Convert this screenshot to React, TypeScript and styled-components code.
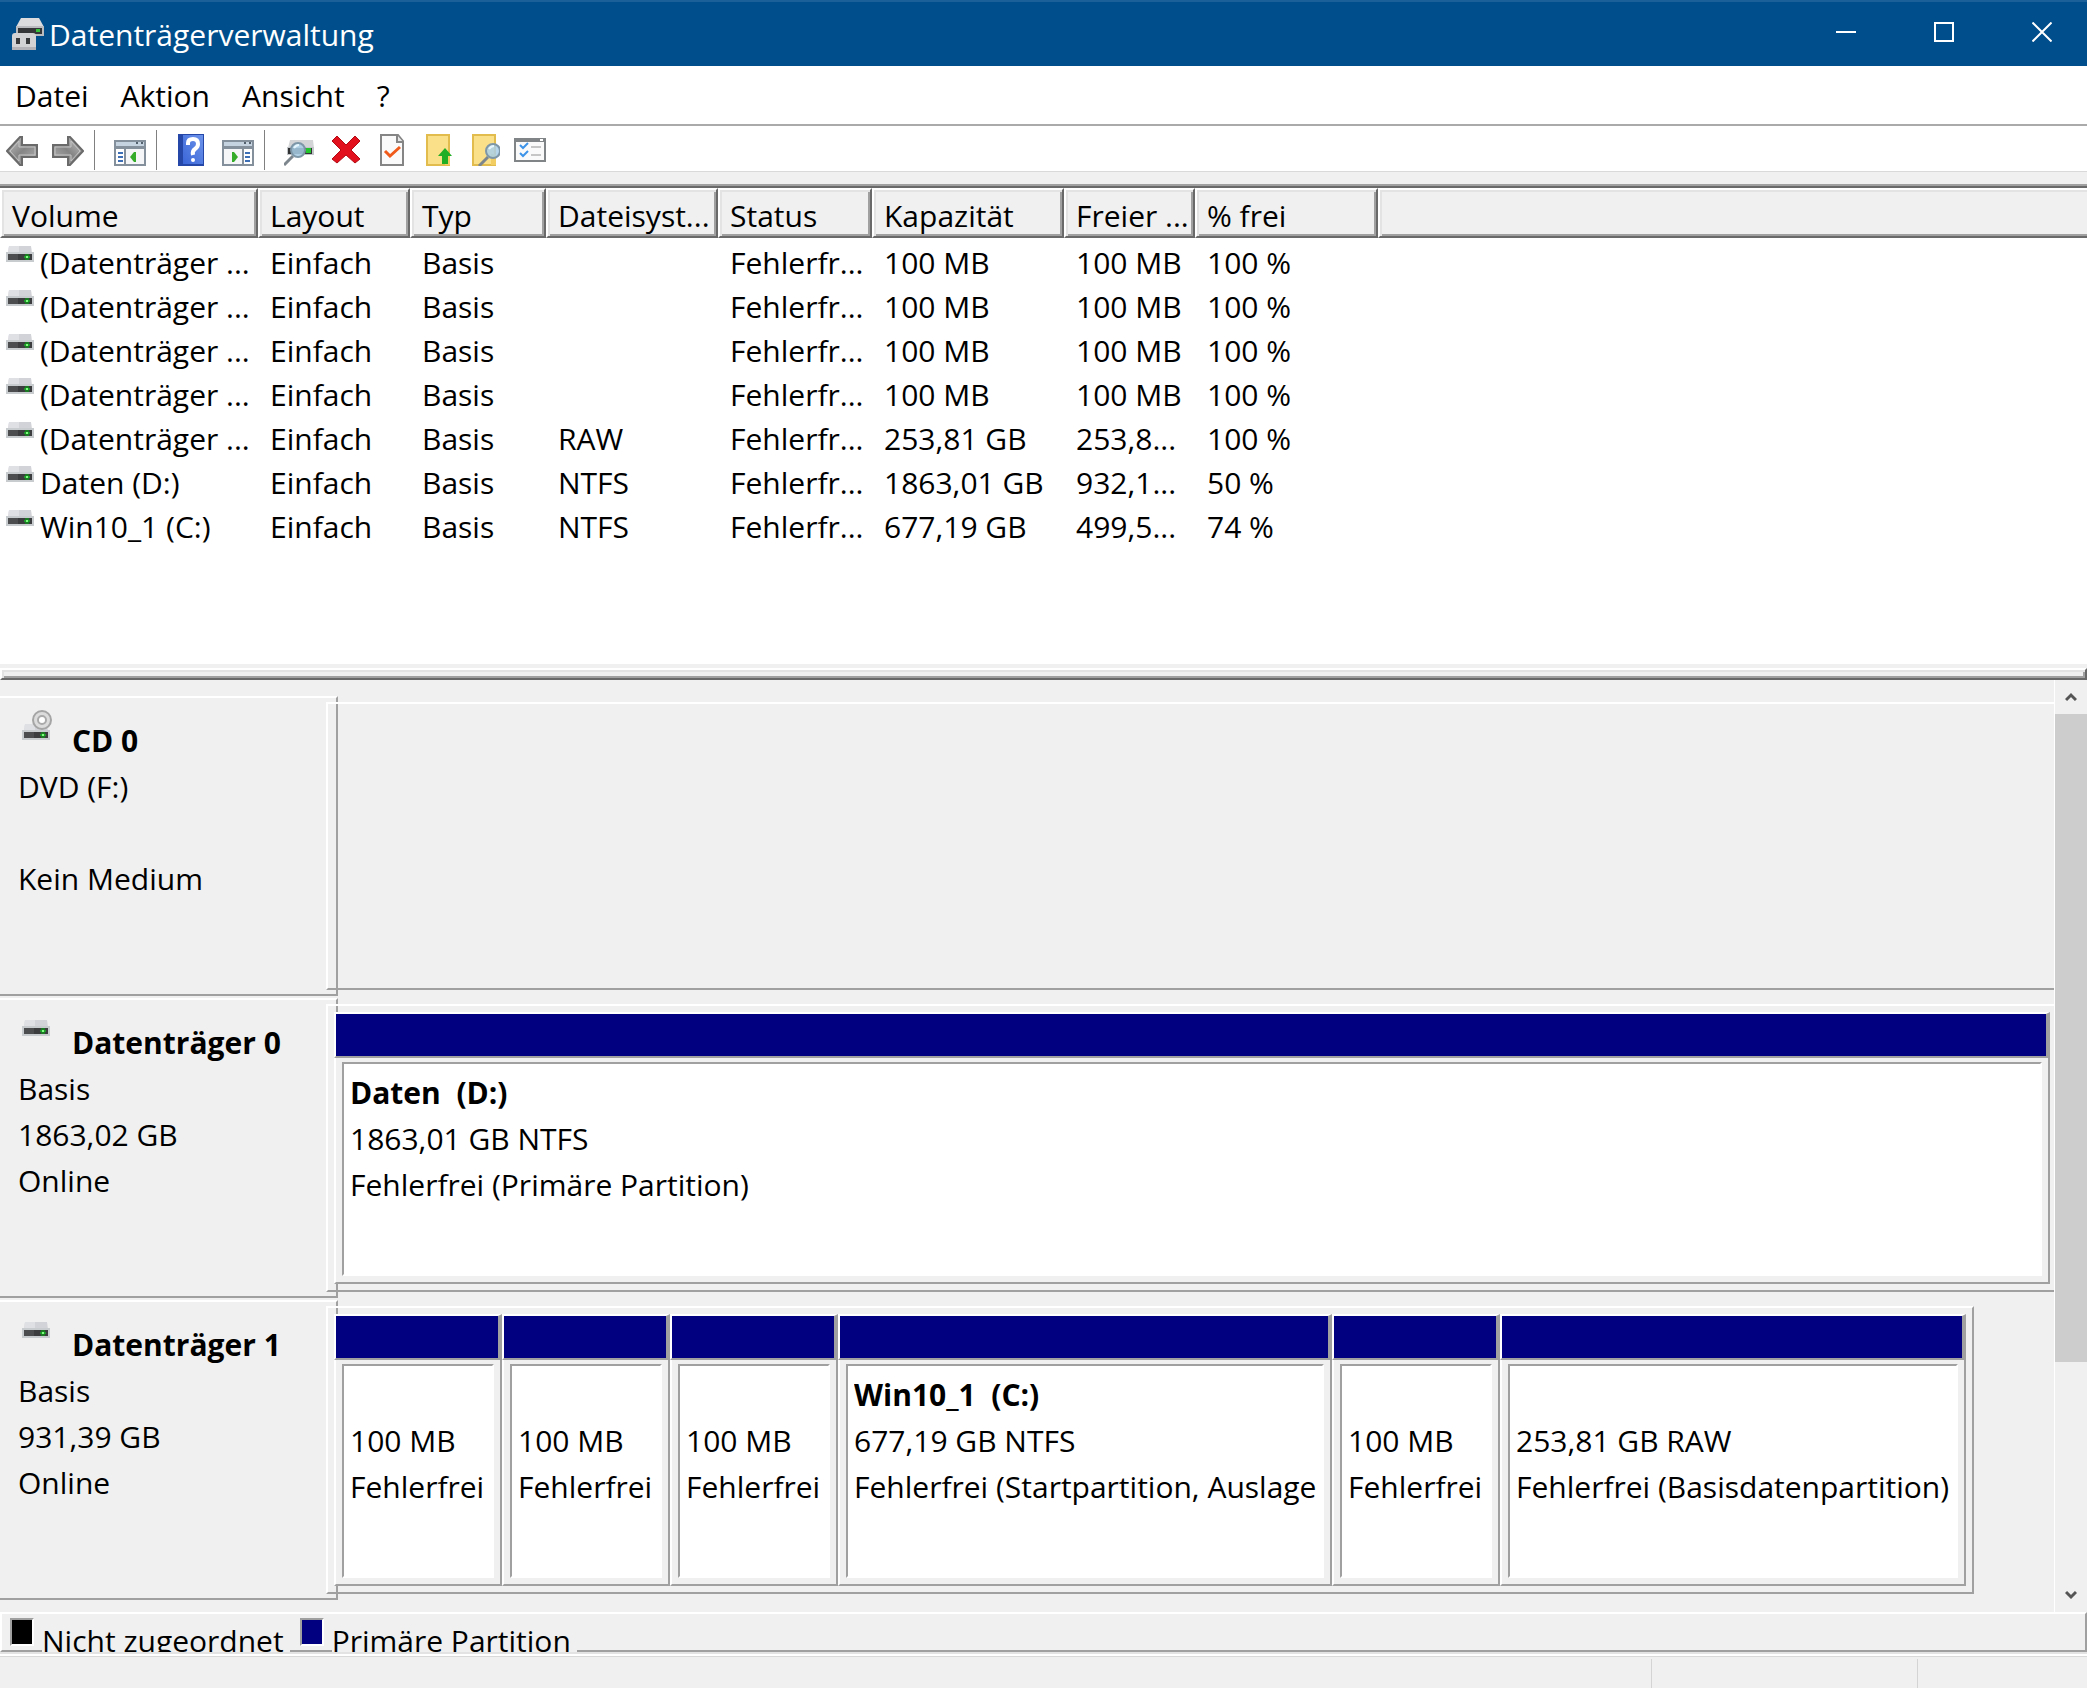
import React from "react";
import styled, { createGlobalStyle } from "styled-components";

const face = "#f0f0f0";
const light = "#ffffff";
const soft = "#e3e3e3";
const shade = "#a0a0a0";
const dark = "#696969";
const navy = "#000080";

const GlobalStyle = createGlobalStyle`
  * { box-sizing: border-box; }
  body {
    margin: 0;
    background: ${face};
    color: #000;
    font-family: "Open Sans", "Noto Sans", sans-serif;
    font-size: 30px;
    line-height: 46px;
  }
  button {
    font: inherit;
    color: inherit;
    background: none;
    border: 0;
    padding: 0;
  }
  svg { display: block; flex: none; }
`;

const Window = styled.div`
  display: flex;
  flex-direction: column;
  min-height: 100vh;
  overflow: hidden;
`;

const TitleBar = styled.header`
  display: flex;
  align-items: center;
  height: 66px;
  padding: 0 0 0 12px;
  gap: 5px;
  background: #004f8c;
  border-top: 2px solid #1b6098;
  color: #fff;
`;

const Title = styled.h1`
  flex: 1;
  margin: 0;
  padding-top: 2px;
  font-size: 30px;
  font-weight: 400;
  line-height: 46px;
`;

const WindowControls = styled.div`
  display: flex;
  align-self: stretch;
  gap: 8px;
`;

const ControlButton = styled.button`
  display: flex;
  justify-content: center;
  align-items: center;
  width: 90px;
  height: 60px;
`;

const MenuBar = styled.nav`
  display: flex;
  align-items: center;
  gap: 32px;
  height: 60px;
  padding: 2px 15px 0;
  background: #fff;
  border-bottom: 2px solid #aaa;
`;

const Toolbar = styled.div`
  display: flex;
  align-items: center;
  gap: 14px;
  height: 46px;
  padding: 2px 6px 0;
  background: #fff;
  border-bottom: 1px solid #d9d9d9;
`;

const Separator = styled.span`
  width: 1px;
  height: 40px;
  margin: 0 5px 0 -4px;
  background: #808080;
`;

const VolumePane = styled.section`
  min-height: 480px;
  margin-top: 12px;
  background: #fff;
  border-top: 2px solid ${shade};
  box-shadow: inset 0 2px ${dark};
  padding-top: 2px;
`;

const VolumeTable = styled.table`
  width: 100%;
  table-layout: fixed;
  border-collapse: separate;
  border-spacing: 0;

  tbody::before {
    content: "";
    display: block;
    height: 3px;
  }
`;

const Column = styled.col<{ $width?: number }>`
  ${(p) => (p.$width ? `width: ${p.$width}px;` : "")}
`;

const HeadCell = styled.th`
  height: 50px;
  padding: 5px 4px 0 10px;
  vertical-align: top;
  text-align: left;
  font-weight: 400;
  line-height: 41px;
  white-space: nowrap;
  overflow: hidden;
  background: ${face};
  border: 2px solid;
  border-color: ${light} ${dark} ${dark} ${light};
  box-shadow: inset 2px 2px ${soft}, inset -2px -2px ${shade};
`;

const FillerHeadCell = styled(HeadCell)`
  border-right: 0;
  box-shadow: inset 2px 2px ${soft}, inset 0 -2px ${shade};
`;

const Cell = styled.td`
  height: 44px;
  padding: 0 0 0 12px;
  line-height: 44px;
  white-space: nowrap;
  overflow: hidden;
`;

const VolumeName = styled.div`
  display: flex;
  gap: 6px;
  margin-left: -6px;

  svg { margin-top: 5px; }
`;

const Splitter = styled.div`
  height: 12px;
  margin-top: 4px;
  background: ${face};
  border: 2px solid;
  border-color: ${light} ${dark} ${dark} ${light};
  box-shadow: inset 2px 2px ${soft}, inset -2px -2px ${shade};
`;

const DiskPane = styled.section`
  display: flex;
  flex: 1;
`;

const DiskList = styled.div`
  display: flex;
  flex: 1;
  flex-direction: column;
  gap: 2px;
  min-width: 0;
  padding: 16px 0 12px;
`;

const DiskRow = styled.article`
  display: flex;
  height: 300px;
`;

const DiskLabel = styled.div`
  flex: none;
  width: 338px;
  padding: 12px 0 0 18px;
  border: 2px solid;
  border-color: ${light} ${shade} ${shade} transparent;
  border-left-width: 0;
`;

const DiskHeading = styled.div`
  display: flex;
  align-items: flex-start;
  gap: 18px;
  height: 54px;
  padding-left: 4px;
`;

const DiskName = styled.h2`
  margin: 0;
  padding-top: 8px;
  font-size: 30px;
  line-height: 46px;
`;

const IconSlot = styled.span<{ $top: number }>`
  width: 32px;
  padding-top: ${(p) => p.$top}px;
`;

const Line = styled.p`
  margin: 0;
  min-height: 46px;
  white-space: pre;
  overflow: hidden;
`;

const DiskMap = styled.div<{ $columns?: string; $trail: number; $closed?: boolean }>`
  display: grid;
  flex: 1;
  grid-template-columns: ${(p) => p.$columns || "1fr"};
  min-width: 0;
  margin: 6px ${(p) => p.$trail}px 6px -12px;
  padding: 6px ${(p) => (p.$closed ? 6 : 4)}px 6px 6px;
  border: 2px solid;
  border-color: ${light} ${shade} ${shade} ${light};
  border-right-width: ${(p) => (p.$closed ? 2 : 0)}px;
`;

const Partition = styled.div`
  display: flex;
  flex-direction: column;
  min-width: 0;
  background: ${face};
`;

const PartitionBar = styled.div`
  height: 46px;
  background: ${navy};
  border: 2px solid;
  border-color: ${light} ${shade} ${shade} ${light};
  border-right-width: 4px;
`;

const PartitionBody = styled.div`
  display: flex;
  flex: 1;
  padding: 4px 6px 6px;
  border: 2px solid;
  border-color: transparent ${shade} ${shade} ${light};
  border-top-width: 0;
`;

const PartitionField = styled.div`
  flex: 1;
  min-width: 0;
  padding: 6px 6px 0;
  background: #fff;
  border: 2px solid;
  border-color: ${shade} ${light} ${light} ${shade};
`;

const PartitionName = styled(Line)`
  font-weight: 700;
`;

const ScrollBar = styled.div`
  display: flex;
  flex: none;
  flex-direction: column;
  width: 33px;
  border-left: 1px solid ${light};
`;

const ScrollButton = styled.button`
  display: flex;
  justify-content: center;
  align-items: center;
  height: 34px;
`;

const ScrollTrack = styled.div`
  flex: 1;
`;

const ScrollThumb = styled.div`
  height: 75%;
  background: #cdcdcd;
`;

const Legend = styled.footer`
  display: flex;
  gap: 10px;
  height: 40px;
  padding: 0 8px;
  border: 2px solid;
  border-color: ${light} ${shade} ${shade} ${light};
`;

const LegendItem = styled.div`
  display: flex;
  gap: 8px;
`;

const Swatch = styled.span<{ $color: string }>`
  width: 24px;
  height: 28px;
  margin-top: 4px;
  background: ${(p) => p.$color};
  border: 2px solid;
  border-color: ${shade} ${light} ${light} ${shade};
`;

const LegendText = styled.span`
  height: 38px;
  padding: 5px 6px 0 0;
  line-height: 44px;
  overflow: hidden;
  background: ${face};
`;

const StatusBar = styled.div`
  display: flex;
  justify-content: flex-end;
  height: 36px;
  padding-top: 2px;
  border-top: 2px solid ${soft};
  box-shadow: inset 0 2px ${light}, inset 0 3px #d9d9d9;
`;

const StatusCell = styled.span<{ $width: number }>`
  width: ${(p) => p.$width}px;
  margin-top: 3px;
  border-left: 1px solid #d4d4d4;
`;

const DriveShape = () => (
  <>
    <path d="M3 0h22l1 7H2z" fill="#d2d3d8" />
    <path d="M3 0h10v7H2z" fill="#dfe0e3" />
    <rect y="6" width="28" height="10" fill="#c9cccf" />
    <rect x="2" y="8" width="24" height="6" fill="#3b3d3e" />
    <rect x="2" y="8" width="10" height="6" fill="#4c4d4f" />
    <path d="M19 8h4v6h-4z" fill="#1d7a24" />
    <path d="M18 10h6v2h-6z" fill="#1d9a2a" />
    <path d="M20 10h2v2h-2z" fill="#7dff7d" />
  </>
);

const DriveIcon = () => (
  <svg width="28" height="16" viewBox="0 0 28 16"><DriveShape /></svg>
);

const OpticalDriveIcon = () => (
  <svg width="32" height="30" viewBox="0 0 32 30">
    <g transform="translate(0 14)"><DriveShape /></g>
    <circle cx="20" cy="10" r="9" fill="#dcdcdc" stroke="#a5a5a5" strokeWidth="2" />
    <circle cx="20" cy="10" r="4" fill="#fff" stroke="#aaa" strokeWidth="2" />
  </svg>
);

const AppIcon = () => (
  <svg width="32" height="32" viewBox="0 0 32 32">
    <path d="M9 0h18l5 9H4z" fill="#dcdcde" />
    <path d="M4 8h28v10H4z" fill="#b9bbbe" />
    <path d="M6 10h24v6H6z" fill="#343638" />
    <path d="M24 11h4v3h-4z" fill="#35c23a" />
    <path d="M0 18q0-3 3-3h18q3 0 3 3v14H0z" fill="#d2d2d5" />
    <path d="M4 20h4v6H4zM14 20h4v6h-4z" fill="#37393b" />
    <path d="M0 29h24v3H0z" fill="#b4b4b8" />
  </svg>
);

const ArrowIcon = ({ flip }: { flip?: boolean }) => (
  <svg width="32" height="32" viewBox="0 0 32 32">
    <defs>
      <linearGradient id={flip ? "arrowR" : "arrowL"} x1="0" x2="1" y1="0" y2="1">
        <stop offset="0" stopColor="#c8c8c8" />
        <stop offset="0.5" stopColor="#858585" />
        <stop offset="1" stopColor="#b5b5b5" />
      </linearGradient>
    </defs>
    <g transform={flip ? "translate(32 0) scale(-1 1)" : undefined}>
      <path d="M1 17L14 3h2v8h15v12H16v8h-2z" fill={`url(#${flip ? "arrowR" : "arrowL"})`} stroke="#6a6a6a" strokeWidth="2" />
      <path d="M4 17L13 7v6h16v8H13v6z" fill="none" stroke="#c4c4c4" strokeWidth="1" />
    </g>
  </svg>
);

const PaneIcon = ({ flip }: { flip?: boolean }) => (
  <svg width="32" height="32" viewBox="0 0 32 32">
    <path d="M1 7h30v24H1z" fill="#fff" stroke="#84919c" strokeWidth="2" />
    <path d="M2 8h28v4H2z" fill="#c5d3e0" />
    <path d="M0 12h32v3H0z" fill="#84919c" />
    <path d="M22 8h2v2h-2zM27 8h2v2h-2z" fill="#53616e" />
    <g transform={flip ? "translate(32 0) scale(-1 1)" : undefined}>
      <path d="M10 15h2v15h-2z" fill="#84919c" />
      <path d="M12 15h18v15H12z" fill="#f4f6f8" />
      <path d="M4 18h5v2H4zM4 22h5v2H4zM4 26h5v2H4z" fill="#3c6fb5" />
      <path d="M22 18v10h-2l-4-5 4-5z" fill="#35ad2a" />
    </g>
  </svg>
);

const HelpIcon = () => (
  <svg width="32" height="32" viewBox="0 0 32 32">
    <defs>
      <linearGradient id="help" x1="0" x2="1" y1="1" y2="0">
        <stop offset="0" stopColor="#3a66d8" />
        <stop offset="1" stopColor="#6c93ea" />
      </linearGradient>
    </defs>
    <path d="M2 0h26v32H2z" fill="#2447a8" />
    <path d="M7 1h20v29H7z" fill="url(#help)" />
    <path d="M12 11V9q0-4 5-4t5 5q0 3-3 5t-2 6" fill="none" stroke="#fff" strokeWidth="4" />
    <circle cx="17" cy="26" r="2" fill="#fff" />
  </svg>
);

const Magnifier = () => (
  <>
    <path d="M2 30l9-9" stroke="#7d868d" strokeWidth="3" />
    <circle cx="16" cy="15" r="7" fill="#a9cfe8" fillOpacity="0.85" stroke="#7e97a8" strokeWidth="2" />
    <path d="M12 13q2-3 5-3" fill="none" stroke="#e6f6ff" strokeWidth="2" />
  </>
);

const InspectDriveIcon = () => (
  <svg width="32" height="32" viewBox="0 0 32 32">
    <path d="M6 6h23l1 8H4z" fill="#d3d4d6" />
    <path d="M3 13h27v8H3z" fill="#c3c6c9" />
    <path d="M4 14h24v6H4z" fill="#303234" />
    <path d="M22 14h5v5h-5z" fill="#22c52c" />
    <g transform="translate(-2 1)"><Magnifier /></g>
  </svg>
);

const DeleteIcon = () => (
  <svg width="32" height="32" viewBox="0 0 32 32">
    <path d="M7 2l9 9 9-9 5 5-9 9 9 9-5 4-9-8-9 8-5-4 9-9-9-9z" fill="#e1101c" stroke="#b30b14" strokeWidth="1" />
  </svg>
);

const PageCheckIcon = () => (
  <svg width="32" height="32" viewBox="0 0 32 32">
    <path d="M5 1h17l5 6v24H5z" fill="#fafafa" stroke="#858585" strokeWidth="2" />
    <path d="M21 1v7h6" fill="#e6e6e6" stroke="#858585" strokeWidth="2" />
    <path d="M9 17l5 5 10-9" fill="none" stroke="#f05a1a" strokeWidth="3" />
  </svg>
);

const FolderBase = () => (
  <>
    <path d="M5 1h22v30H5z" fill="#fbe08a" stroke="#e2bc4c" strokeWidth="2" />
    <path d="M23 20h5v11h-5z" fill="#f2cd62" />
  </>
);

const FolderUpIcon = () => (
  <svg width="32" height="32" viewBox="0 0 32 32">
    <FolderBase />
    <path d="M23 14l7 8h-4v8h-6v-8h-4z" fill="#1fae24" />
  </svg>
);

const FolderSearchIcon = () => (
  <svg width="32" height="32" viewBox="0 0 32 32">
    <FolderBase />
    <g transform="translate(9 2)"><Magnifier /></g>
  </svg>
);

const ChecklistIcon = () => (
  <svg width="32" height="32" viewBox="0 0 32 32">
    <path d="M1 5h30v22H1z" fill="#fafafa" stroke="#808487" strokeWidth="2" />
    <path d="M1 4h30v4H1z" fill="#808487" />
    <path d="M26 5h3v2h-3z" fill="#fff" />
    <path d="M6 11l3 3 5-5M6 19l3 3 5-5" fill="none" stroke="#3d93e8" strokeWidth="2" />
    <path d="M17 13h10M17 21h10" stroke="#c6c6c6" strokeWidth="2" />
  </svg>
);

const MinimizeIcon = () => (
  <svg width="20" height="20" viewBox="0 0 20 20"><path d="M0 10h20" stroke="#fff" strokeWidth="2" /></svg>
);
const MaximizeIcon = () => (
  <svg width="20" height="20" viewBox="0 0 20 20"><path d="M1 1h18v18H1z" fill="none" stroke="#fff" strokeWidth="2" /></svg>
);
const CloseIcon = () => (
  <svg width="20" height="20" viewBox="0 0 20 20"><path d="M0.500 0.500l19 19M19.500 0.500l-19 19" stroke="#fff" strokeWidth="2" /></svg>
);

const Chevron = ({ down }: { down?: boolean }) => (
  <svg width="12" height="10" viewBox="0 0 12 10">
    <path d={down ? "M1 2l5 5 5-5" : "M1 8l5-5 5 5"} fill="none" stroke="#555" strokeWidth="3" />
  </svg>
);

const menus = ["Datei", "Aktion", "Ansicht", "?"];

const toolGroups = [
  [
    { label: "Zurück", icon: <ArrowIcon /> },
    { label: "Vorwärts", icon: <ArrowIcon flip /> },
  ],
  [{ label: "Konsolenstruktur", icon: <PaneIcon /> }],
  [
    { label: "Hilfe", icon: <HelpIcon /> },
    { label: "Aktionsbereich", icon: <PaneIcon flip /> },
  ],
  [
    { label: "Datenträger prüfen", icon: <InspectDriveIcon /> },
    { label: "Löschen", icon: <DeleteIcon /> },
    { label: "Eigenschaften", icon: <PageCheckIcon /> },
    { label: "Nach oben", icon: <FolderUpIcon /> },
    { label: "Suchen", icon: <FolderSearchIcon /> },
    { label: "Optionen", icon: <ChecklistIcon /> },
  ],
];

const columns = [
  { name: "Volume", width: 258 },
  { name: "Layout", width: 152 },
  { name: "Typ", width: 136 },
  { name: "Dateisyst...", width: 172 },
  { name: "Status", width: 154 },
  { name: "Kapazität", width: 192 },
  { name: "Freier ...", width: 131 },
  { name: "% frei", width: 183 },
];

const volumes = [
  ["(Datenträger ...", "", "100 MB", "100 MB", "100 %"],
  ["(Datenträger ...", "", "100 MB", "100 MB", "100 %"],
  ["(Datenträger ...", "", "100 MB", "100 MB", "100 %"],
  ["(Datenträger ...", "", "100 MB", "100 MB", "100 %"],
  ["(Datenträger ...", "RAW", "253,81 GB", "253,8...", "100 %"],
  ["Daten (D:)", "NTFS", "1863,01 GB", "932,1...", "50 %"],
  ["Win10_1 (C:)", "NTFS", "677,19 GB", "499,5...", "74 %"],
];

type Part = { span: number; name?: string; size: string; state: string };
type Disk = { name: string; lines: string[]; optical?: boolean; trail: number; closed?: boolean; parts: Part[] };

const small: Part = { span: 168, size: "100 MB", state: "Fehlerfrei" };

const disks: Disk[] = [
  { name: "CD 0", lines: ["DVD (F:)", "", "Kein Medium"], optical: true, trail: 0, parts: [] },
  {
    name: "Datenträger 0",
    lines: ["Basis", "1863,02 GB", "Online"],
    trail: 0,
    parts: [{ span: 1, name: "Daten  (D:)", size: "1863,01 GB NTFS", state: "Fehlerfrei (Primäre Partition)" }],
  },
  {
    name: "Datenträger 1",
    lines: ["Basis", "931,39 GB", "Online"],
    trail: 80,
    closed: true,
    parts: [
      small,
      small,
      small,
      { span: 494, name: "Win10_1  (C:)", size: "677,19 GB NTFS", state: "Fehlerfrei (Startpartition, Auslage" },
      small,
      { span: 466, size: "253,81 GB RAW", state: "Fehlerfrei (Basisdatenpartition)" },
    ],
  },
];

const legend = [
  { label: "Nicht zugeordnet", color: "#000" },
  { label: "Primäre Partition", color: navy },
];

export default function App() {
  return (
    <Window>
      <GlobalStyle />
      <TitleBar>
        <AppIcon />
        <Title>Datenträgerverwaltung</Title>
        <WindowControls>
          <ControlButton aria-label="Minimieren"><MinimizeIcon /></ControlButton>
          <ControlButton aria-label="Maximieren"><MaximizeIcon /></ControlButton>
          <ControlButton aria-label="Schließen"><CloseIcon /></ControlButton>
        </WindowControls>
      </TitleBar>

      <MenuBar>
        {menus.map((m) => <button key={m}>{m}</button>)}
      </MenuBar>

      <Toolbar>
        {toolGroups.map((group, i) => (
          <React.Fragment key={i}>
            {i > 0 && <Separator />}
            {group.map((t) => <button key={t.label} aria-label={t.label}>{t.icon}</button>)}
          </React.Fragment>
        ))}
      </Toolbar>

      <VolumePane>
        <VolumeTable>
          <colgroup>
            {columns.map((c) => <Column key={c.name} $width={c.width} />)}
            <Column />
          </colgroup>
          <thead>
            <tr>
              {columns.map((c) => <HeadCell key={c.name}>{c.name}</HeadCell>)}
              <FillerHeadCell />
            </tr>
          </thead>
          <tbody>
            {volumes.map(([name, fs, size, free, percent], i) => (
              <tr key={i}>
                <Cell><VolumeName><DriveIcon />{name}</VolumeName></Cell>
                <Cell>Einfach</Cell>
                <Cell>Basis</Cell>
                <Cell>{fs}</Cell>
                <Cell>Fehlerfr...</Cell>
                <Cell>{size}</Cell>
                <Cell>{free}</Cell>
                <Cell>{percent}</Cell>
                <Cell />
              </tr>
            ))}
          </tbody>
        </VolumeTable>
      </VolumePane>

      <Splitter />

      <DiskPane>
        <DiskList>
          {disks.map((d) => (
            <DiskRow key={d.name}>
              <DiskLabel>
                <DiskHeading>
                  <IconSlot $top={d.optical ? 0 : 8}>{d.optical ? <OpticalDriveIcon /> : <DriveIcon />}</IconSlot>
                  <DiskName>{d.name}</DiskName>
                </DiskHeading>
                {d.lines.map((l, i) => <Line key={i}>{l}</Line>)}
              </DiskLabel>
              <DiskMap
                $columns={d.parts.map((p) => `${p.span}fr`).join(" ")}
                $trail={d.trail}
                $closed={d.closed}
              >
                {d.parts.map((p, i) => (
                  <Partition key={i}>
                    <PartitionBar />
                    <PartitionBody>
                      <PartitionField>
                        <PartitionName>{p.name}</PartitionName>
                        <Line>{p.size}</Line>
                        <Line>{p.state}</Line>
                      </PartitionField>
                    </PartitionBody>
                  </Partition>
                ))}
              </DiskMap>
            </DiskRow>
          ))}
        </DiskList>
        <ScrollBar>
          <ScrollButton aria-label="Nach oben scrollen"><Chevron /></ScrollButton>
          <ScrollTrack><ScrollThumb /></ScrollTrack>
          <ScrollButton aria-label="Nach unten scrollen"><Chevron down /></ScrollButton>
        </ScrollBar>
      </DiskPane>

      <Legend>
        {legend.map((l) => (
          <LegendItem key={l.label}>
            <Swatch $color={l.color} />
            <LegendText>{l.label}</LegendText>
          </LegendItem>
        ))}
      </Legend>

      <StatusBar>
        <StatusCell $width={266} />
        <StatusCell $width={170} />
      </StatusBar>
    </Window>
  );
}
